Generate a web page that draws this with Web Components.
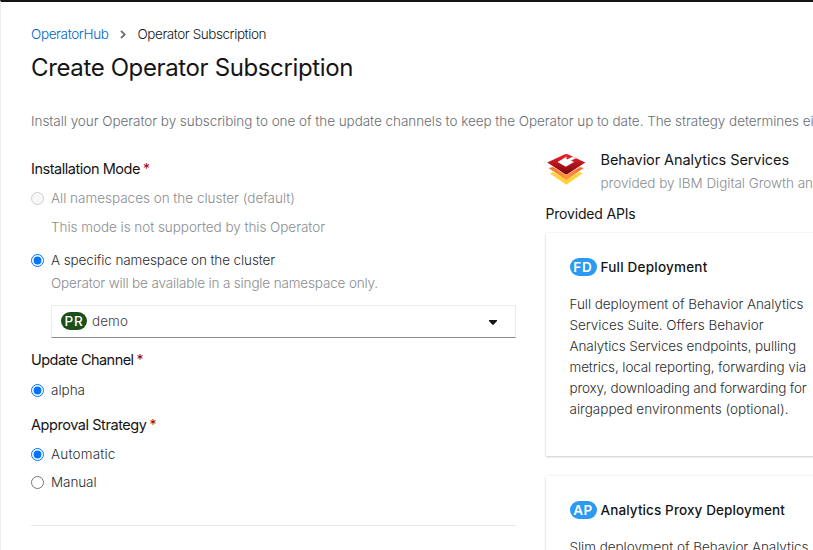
<!DOCTYPE html>
<html lang="en">
<head>
<meta charset="utf-8">
<title>Create Operator Subscription</title>
<style>
html,body{margin:0;height:550px;overflow:hidden;background:#fff}
body{font:300 13.5px/20px Inter,"Liberation Sans",sans-serif;color:#151515}
</style>
</head>
<body>
<subscription-page></subscription-page>
<script>
const define = (name, html, ready) => customElements.define(name, class extends HTMLElement {
  connectedCallback() {
    if (this.shadowRoot) return;
    const t = document.createElement('template');
    t.innerHTML = html;
    this.attachShadow({mode: 'open'}).append(t.content.cloneNode(true));
    if (ready) ready(this, this.shadowRoot);
  }
});

// One line of text, tracked so that it spans the width given in "w".
define('text-line', `<style>
:host{display:block;white-space:nowrap;flex:none}
span{display:inline-block}
</style><span><slot></slot></span>`, (el, root) => {
  const span = root.querySelector('span');
  const width = span.getBoundingClientRect().width;
  const gap = (el.getAttribute('w') - width) / el.textContent.length;
  span.style.letterSpacing = gap.toFixed(3) + 'px';
});

define('page-crumbs', `<style>
:host{display:flex;height:20px;align-items:center}
svg{margin:0 12px 0 11px}
.link{color:#06c}
</style>
<text-line class="link" w="77.5">OperatorHub</text-line>
<svg width="6" height="9" viewBox="0 0 6 9" fill="none" stroke="#6a6e73" stroke-width="1.8"><path d="M1 .8 4.7 4.5 1 8.2"/></svg>
<text-line w="128.5">Operator Subscription</text-line>`);

define('field-title', `<style>
:host{display:flex;height:20px;gap:3px;font-size:14.5px;font-weight:400}
i{font:400 14px/20px Inter,sans-serif;color:#a30000}
</style><slot></slot><i>*</i>`);

define('radio-option', `<style>
:host{display:flex;height:20px;align-items:center;color:#2b2d2f}
:host([disabled]){color:#8a8d90}
input{margin:1px 7px 0 0;width:13px;height:13px;flex:none}
</style><input type="radio"><slot></slot>`, (el, root) => {
  const input = root.querySelector('input');
  input.checked = el.hasAttribute('checked');
  input.disabled = el.hasAttribute('disabled');
});

define('kind-badge', `<style>
:host{display:flex;justify-content:center;box-sizing:border-box;height:18px;width:27px;border-radius:9px;background:var(--badge,#2b9af3);color:#fff;font-size:13.5px;line-height:18px;font-weight:600;flex:none}
</style><slot></slot>`);

define('namespace-select', `<style>
:host{display:flex;align-items:center;box-sizing:border-box;height:33px;border:1px solid #ededed;border-bottom-color:#8a8d90;padding:0 18px 1px 9px;color:#3c3f42}
kind-badge{--badge:#1e4f18;width:26px;margin-right:5px;font-weight:500}
svg{margin:3px 0 0 auto}
</style><kind-badge><text-line w="19">PR</text-line></kind-badge><slot></slot>
<svg width="8" height="5" viewBox="0 0 8 5" fill="#151515"><path d="M0 0h8v1L4.6 4.7H3.4L0 1z"/></svg>`);

define('install-form', `<style>
:host{display:flex;flex-direction:column;width:485px;flex:none;padding-top:27px;box-sizing:border-box}
.hint{padding-left:20px;color:#8a8d90}
hr{width:100%;border:0;border-top:1px solid #e7e7e7;margin:33px 0 0}
</style>
<field-title><text-line w="109">Installation Mode</text-line></field-title>
<radio-option disabled style="margin-top:9px"><text-line w="244">All namespaces on the cluster (default)</text-line></radio-option>
<text-line class="hint" style="margin-top:9px" w="274">This mode is not supported by this Operator</text-line>
<radio-option checked style="margin-top:13px"><text-line w="224">A specific namespace on the cluster</text-line></radio-option>
<text-line class="hint" style="margin-top:3px" w="327">Operator will be available in a single namespace only.</text-line>
<namespace-select style="margin:12px 0 0 20px"><text-line w="36">demo</text-line></namespace-select>
<field-title style="margin-top:12px"><text-line w="102.5">Update Channel</text-line></field-title>
<radio-option checked style="margin-top:10px"><text-line w="34">alpha</text-line></radio-option>
<field-title style="margin-top:15px"><text-line w="115.5">Approval Strategy</text-line></field-title>
<radio-option checked style="margin-top:9px"><text-line w="64.5">Automatic</text-line></radio-option>
<radio-option style="margin-top:8px"><text-line w="45.5">Manual</text-line></radio-option>
<hr>`);

define('layers-logo', `<style>:host{display:block;width:40px;height:34px;flex:none}svg{display:block}</style>
<svg width="40" height="34" viewBox="0 0 40 34">
<defs><linearGradient id="r" x2="0" y2="1"><stop stop-color="#ed2630"/><stop offset="1" stop-color="#79050c"/></linearGradient>
<linearGradient id="o"><stop stop-color="#f26a2b"/><stop offset=".5" stop-color="#ff9838"/><stop offset="1" stop-color="#f26a2b"/></linearGradient></defs>
<path d="M4 20.5 7 19l13.3 7.5L33.5 19l3 1.5-16.2 11.3z" fill="#ffd13b"/>
<path d="M2.6 15 7 14l13.3 8L33.8 14l4 1-17.5 12z" fill="url(#o)"/>
<path d="M1.2 9.4 18.8 1.2Q20.3.6 21.8 1.2L39.3 9.4 21.6 21Q20.3 21.8 19 21z" fill="url(#r)"/>
<path d="M20.5 4 12 9 19.8 13.4 27.5 9 24.6 7.5 29.5 5.2 26.8 4 21.2 6.6 20 6z" fill="#fff" stroke="#fff" stroke-width=".5" stroke-linejoin="round"/>
</svg>`);

define('operator-header', `<style>
:host{display:flex;height:43px;gap:15px}
layers-logo{margin-top:3px}
.name{font-size:14.5px;font-weight:400}
.by{margin-top:3px;color:#8a8d90}
</style><layers-logo></layers-logo>
<div><text-line class="name" w="188.5">Behavior Analytics Services</text-line>
<text-line class="by" w="212.5">provided by IBM Digital Growth an</text-line></div>`);

define('api-card', `<style>
:host{display:block;box-sizing:border-box;width:330px;height:223px;padding:24px;background:#fff;box-shadow:0 1px 2px rgba(3,3,3,.18),0 0 2px rgba(3,3,3,.08)}
header{display:flex;align-items:center;gap:4px;height:20px;font-weight:500}
.body{margin-top:17px;line-height:21px;color:#2b2d2f}
</style><header><slot name="badge"></slot><slot name="title"></slot></header><div class="body"><slot></slot></div>`);

define('api-panel', `<style>
:host{display:flex;flex-direction:column;width:330px;flex:none;padding-top:18px}
.heading{margin:11px 0 9px;font-size:14px;font-weight:400}
api-card+api-card{margin-top:20px}
</style>
<operator-header></operator-header>
<text-line class="heading" w="90">Provided APIs</text-line>
<api-card>
<kind-badge slot="badge"><text-line w="19.5">FD</text-line></kind-badge>
<text-line slot="title" w="107">Full Deployment</text-line>
<text-line w="234">Full deployment of Behavior Analytics</text-line>
<text-line w="194">Services Suite. Offers Behavior</text-line>
<text-line w="226.5">Analytics Services endpoints, pulling</text-line>
<text-line w="236.5">metrics, local reporting, forwarding via</text-line>
<text-line w="237">proxy, downloading and forwarding for</text-line>
<text-line w="219">airgapped environments (optional).</text-line>
</api-card>
<api-card>
<kind-badge slot="badge"><text-line w="19.5">AP</text-line></kind-badge>
<text-line slot="title" w="184.5">Analytics Proxy Deployment</text-line>
<text-line w="239">Slim deployment of Behavior Analytics</text-line>
</api-card>`);

define('subscription-page', `<style>
:host{display:block;box-sizing:border-box;width:813px;height:550px;overflow:hidden;background:#fff;border-top:2px solid #151515;border-left:1px solid #ededed;padding:22px 0 0 30px}
h1{margin:9px 0 0;font-size:24px;line-height:30px;font-weight:400}
.intro{margin-top:28px;color:#6a6e73}
main{display:flex;gap:29.5px;padding-top:1px}
</style>
<page-crumbs></page-crumbs>
<h1><text-line w="322">Create Operator Subscription</text-line></h1>
<text-line class="intro" w="782.5">Install your Operator by subscribing to one of the update channels to keep the Operator up to date. The strategy determines ei</text-line>
<main><install-form></install-form><api-panel></api-panel></main>`);
</script>
</body>
</html>
